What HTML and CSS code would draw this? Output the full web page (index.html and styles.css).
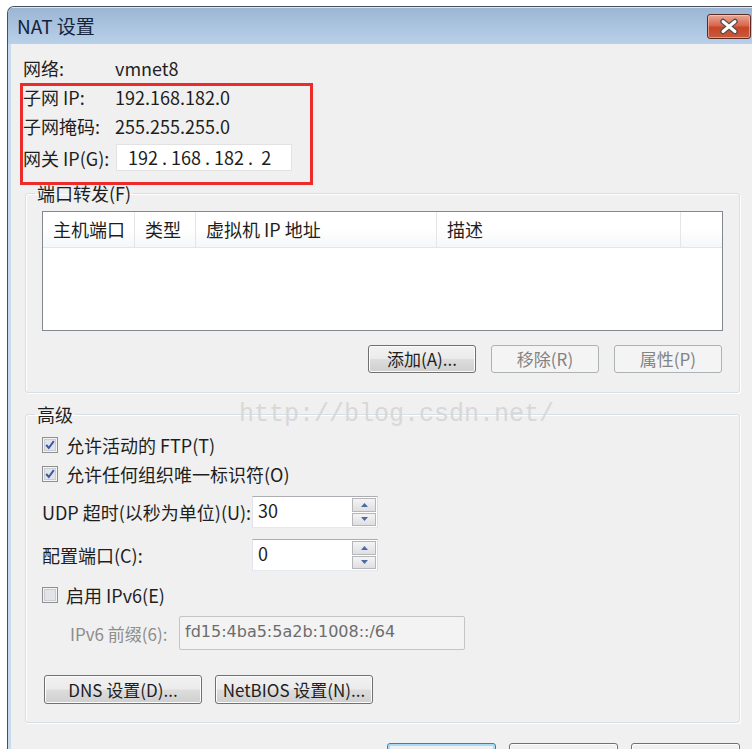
FILE: index.html
```html
<!DOCTYPE html>
<html lang="zh-CN">
<head>
<meta charset="utf-8">
<title>NAT 设置</title>
<link rel="stylesheet" href="styles.css">
</head>
<body>
<div class="page">
  <div class="window">
    <div class="titlebar">
      <span class="title">NAT 设置</span>
      <div class="close">
        <svg width="44" height="25" viewBox="0 0 44 25">
          <path d="M16 7.5 L28 17.5 M28 7.5 L16 17.5" stroke="#4d4d4d" stroke-width="5.5" stroke-linecap="round"/>
          <path d="M16 7.5 L28 17.5 M28 7.5 L16 17.5" stroke="#ffffff" stroke-width="3" stroke-linecap="round"/>
        </svg>
      </div>
    </div>
    <div class="frame">
      <div class="content">
        <div class="info-row"><span class="lbl">网络:</span><span class="val">vmnet8</span></div>
        <div class="highlight">
          <div class="info-row"><span class="lbl">子网 IP:</span><span class="val">192.168.182.0</span></div>
          <div class="info-row gap"><span class="lbl">子网掩码:</span><span class="val">255.255.255.0</span></div>
          <div class="info-row gw"><span class="lbl">网关 IP(G):</span><div class="ip-input">192 . 168 . 182 .  2</div></div>
        </div>

        <fieldset class="group g1">
          <legend>端口转发(F)</legend>
          <div class="list">
            <div class="list-head">
              <div class="col c1">主机端口</div>
              <div class="col c2">类型</div>
              <div class="col c3">虚拟机 IP 地址</div>
              <div class="col c4">描述</div>
              <div class="col c5"></div>
            </div>
          </div>
          <div class="btn-row">
            <div class="btn">添加(A)...</div>
            <div class="btn disabled">移除(R)</div>
            <div class="btn disabled">属性(P)</div>
          </div>
        </fieldset>

        <fieldset class="group g2">
          <legend>高级</legend>
          <div class="cb-row">
            <span class="cb"><svg width="16" height="16" viewBox="0 0 16 16"><rect x="0.5" y="0.5" width="15" height="15" fill="#f4f4f4" stroke="#8f8f8f"/><rect x="2.5" y="2.5" width="11" height="11" fill="#e2e4e8" stroke="#c9cdd3"/><path d="M4.2 8 L6.8 11 L11.8 4.2" fill="none" stroke="#3a57a6" stroke-width="2"/></svg></span>
            <span>允许活动的 FTP(T)</span>
          </div>
          <div class="cb-row">
            <span class="cb"><svg width="16" height="16" viewBox="0 0 16 16"><rect x="0.5" y="0.5" width="15" height="15" fill="#f4f4f4" stroke="#8f8f8f"/><rect x="2.5" y="2.5" width="11" height="11" fill="#e2e4e8" stroke="#c9cdd3"/><path d="M4.2 8 L6.8 11 L11.8 4.2" fill="none" stroke="#3a57a6" stroke-width="2"/></svg></span>
            <span>允许任何组织唯一标识符(O)</span>
          </div>
          <div class="spin-row first">
            <span class="spin-lbl">UDP 超时(以秒为单位)(U):</span>
            <div class="spin">
              <div class="spin-text">30</div>
              <div class="spin-btns">
                <div class="spin-btn"><svg width="7" height="4" viewBox="0 0 7 4"><path d="M0 4 L3.5 0 L7 4Z" fill="#4e6aa6"/></svg></div>
                <div class="spin-btn"><svg width="7" height="4" viewBox="0 0 7 4"><path d="M0 0 L7 0 L3.5 4Z" fill="#4e6aa6"/></svg></div>
              </div>
            </div>
          </div>
          <div class="spin-row second">
            <span class="spin-lbl">配置端口(C):</span>
            <div class="spin">
              <div class="spin-text">0</div>
              <div class="spin-btns">
                <div class="spin-btn"><svg width="7" height="4" viewBox="0 0 7 4"><path d="M0 4 L3.5 0 L7 4Z" fill="#4e6aa6"/></svg></div>
                <div class="spin-btn"><svg width="7" height="4" viewBox="0 0 7 4"><path d="M0 0 L7 0 L3.5 4Z" fill="#4e6aa6"/></svg></div>
              </div>
            </div>
          </div>
          <div class="cb-row ipv6">
            <span class="cb"><svg width="16" height="16" viewBox="0 0 16 16"><rect x="0.5" y="0.5" width="15" height="15" fill="#f4f4f4" stroke="#8f8f8f"/><rect x="2.5" y="2.5" width="11" height="11" fill="#e2e4e8" stroke="#c9cdd3"/></svg></span>
            <span>启用 IPv6(E)</span>
          </div>
          <div class="prefix-row">
            <span class="prefix-lbl">IPv6 前缀(6):</span>
            <div class="prefix-input">fd15:4ba5:5a2b:1008::/64</div>
          </div>
          <div class="btn-row left">
            <div class="btn wide">DNS 设置(D)...</div>
            <div class="btn wide">NetBIOS 设置(N)...</div>
          </div>
        </fieldset>

        <div class="dlg-buttons">
          <div class="btn dlg default"></div>
          <div class="btn dlg"></div>
          <div class="btn dlg"></div>
        </div>
      </div>
    </div>
    <div class="watermark">http://blog.csdn.net/</div>
  </div>
</div>
</body>
</html>
```

FILE: styles.css
```css
html, body {
  margin: 0;
  padding: 0;
}
body {
  width: 752px;
  height: 749px;
  overflow: hidden;
  background: #ffffff;
  font-family: "Noto Sans CJK SC", "Noto Sans", sans-serif;
  font-size: 18px;
  color: #1e1e1e;
}
.page {
  padding: 6px 0 0 7px;
}
.window {
  position: relative;
  width: 745px;
  box-sizing: border-box;
  border: 1px solid #4b5058;
  border-right: none;
  border-bottom: none;
  border-radius: 7px 0 0 0;
  overflow: hidden;
  background: #c8daed;
}
.titlebar {
  height: 37px;
  display: flex;
  justify-content: space-between;
  align-items: flex-start;
  padding-left: 9px;
  background: linear-gradient(#9bb6d4, #b9d0e9);
  border-top: 1px solid #dbe6f2;
  box-sizing: border-box;
}
.title {
  font-size: 19px;
  line-height: 36px;
  color: #14233b;
}
.close {
  margin-top: 6px;
  margin-right: 1px;
  width: 44px;
  height: 25px;
  box-sizing: border-box;
  border: 1px solid #5b2a24;
  border-radius: 3px;
  background: linear-gradient(#e9a896 0%, #d8674c 45%, #c84428 55%, #c85a3c 100%);
  box-shadow: inset 0 0 0 1px rgba(255, 220, 210, 0.5);
  display: flex;
  align-items: center;
  justify-content: center;
}
.close svg {
  display: block;
  margin: -1px;
}
.frame {
  padding-left: 3px;
  background: #c8daed;
}
.content {
  background: #f0f0f0;
  padding-top: 13px;
  padding-bottom: 40px;
}
.info-row {
  display: flex;
  align-items: center;
  height: 22px;
  padding-left: 12px;
  line-height: 22px;
}
.info-row .lbl {
  width: 92px;
  flex: none;
}
.highlight {
  position: relative;
  z-index: 2;
  width: 293px;
  box-sizing: border-box;
  margin: 4px 0 0 9px;
  border: 3px solid #ee2b2b;
  padding-bottom: 11px;
}
.highlight .info-row {
  padding-left: 0;
}
.highlight .info-row.gap {
  margin-top: 7px;
}
.highlight .info-row.gw {
  margin-top: 7px;
  height: 27px;
}
.highlight .gw .lbl {
  width: 93px;
}
.ip-input {
  width: 176px;
  height: 27px;
  box-sizing: border-box;
  border: 1px solid #e2e2e2;
  background: #ffffff;
  padding-left: 11px;
  line-height: 25px;
  white-space: pre;
}
.group {
  margin: 0 0 0 14px;
  width: 715px;
  box-sizing: border-box;
  border: 1px solid #d5dfe5;
  border-radius: 3px;
  box-shadow: inset 1px 1px 0 #ffffff, 1px 1px 0 #ffffff;
  min-inline-size: 0;
}
.group legend {
  margin-left: -7px;
  padding: 0 2px;
  line-height: 16px;
  font-size: 18px;
}
.g1 {
  padding: 10px 16px 19px 16px;
}
.g2 {
  margin-top: 13px;
  padding: 8px 16px 18px 16px;
}
.list {
  height: 120px;
  box-sizing: border-box;
  border: 1px solid #828790;
  background: #ffffff;
}
.list-head {
  display: flex;
  height: 35px;
  border-bottom: 1px solid #e5e5e5;
  background: linear-gradient(#ffffff 0%, #ffffff 50%, #f5f6f7 100%);
}
.col {
  box-sizing: border-box;
  padding-left: 10px;
  line-height: 35px;
  border-right: 1px solid #e4e5e7;
}
.c1 { width: 92px; }
.c2 { width: 61px; }
.c3 { width: 241px; }
.c4 { width: 244px; }
.c5 { flex: 1; border-right: none; }
.btn-row {
  display: flex;
  justify-content: flex-end;
  gap: 15px;
  margin-top: 14px;
  padding-right: 1px;
}
.btn {
  width: 108px;
  height: 28px;
  box-sizing: border-box;
  border: 1px solid #707070;
  border-radius: 3px;
  background: linear-gradient(#f2f2f2 0%, #ebebeb 48%, #dddddd 52%, #cfcfcf 100%);
  box-shadow: inset 0 0 0 1px #fcfcfc;
  text-align: center;
  line-height: 26px;
  font-size: 17px;
}
.btn.disabled {
  border-color: #adb2b5;
  background: #f4f4f4;
  color: #838383;
  box-shadow: none;
}
.btn-row.left {
  justify-content: flex-start;
  gap: 13px;
  margin-top: 25px;
  padding-left: 2px;
}
.btn.wide {
  width: 158px;
  height: 29px;
  line-height: 27px;
}
.cb-row {
  display: flex;
  align-items: center;
  height: 29px;
  gap: 8px;
}
.cb {
  display: flex;
  width: 16px;
  height: 16px;
}
.spin-row {
  display: flex;
  align-items: center;
  height: 32px;
}
.spin-row.first { margin-top: 8px; }
.spin-row.second { margin-top: 11px; }
.spin-lbl {
  width: 210px;
  flex: none;
}
.spin {
  display: flex;
  width: 126px;
  height: 32px;
  box-sizing: border-box;
  border: 1px solid #abadb3;
  border-color: #abadb3 #dbdfe6 #e3e9ef #e2e3ea;
  background: #ffffff;
}
.spin-text {
  flex: 1;
  padding-left: 5px;
  line-height: 26px;
}
.spin-btns {
  width: 25px;
  display: flex;
  flex-direction: column;
  gap: 1px;
  padding: 1px 1px 1px 0;
  box-sizing: border-box;
}
.spin-btn {
  flex: 1;
  display: flex;
  align-items: center;
  justify-content: center;
  border: 1px solid #b4b6ba;
  background: linear-gradient(#f4f4f4, #dedfe1);
}
.cb-row.ipv6 {
  margin-top: 10px;
  height: 28px;
}
.prefix-row {
  display: flex;
  align-items: center;
  margin-top: 7px;
  padding-left: 28px;
}
.prefix-lbl {
  width: 109px;
  flex: none;
  color: #8d8d8d;
  font-size: 17px;
}
.prefix-input {
  width: 286px;
  height: 34px;
  box-sizing: border-box;
  border: 1px solid #c2c4c7;
  border-radius: 2px;
  background: #f3f3f3;
  padding-left: 5px;
  line-height: 30px;
  color: #6d6d6d;
  font-family: "DejaVu Sans", "Noto Sans", sans-serif;
  font-size: 16px;
}
.dlg-buttons {
  display: flex;
  justify-content: flex-end;
  gap: 13px;
  margin: 20px 0 0 14px;
  width: 715px;
}
.btn.dlg {
  width: 109px;
  height: 29px;
}
.btn.dlg.default {
  border-color: #3c7fb1;
  box-shadow: inset 0 0 0 2px #a6dcf8;
}
.watermark {
  position: absolute;
  left: 231px;
  top: 393px;
  font-family: "Liberation Mono", monospace;
  font-size: 25px;
  color: #d8d8d8;
  white-space: pre;
  pointer-events: none;
}
```
